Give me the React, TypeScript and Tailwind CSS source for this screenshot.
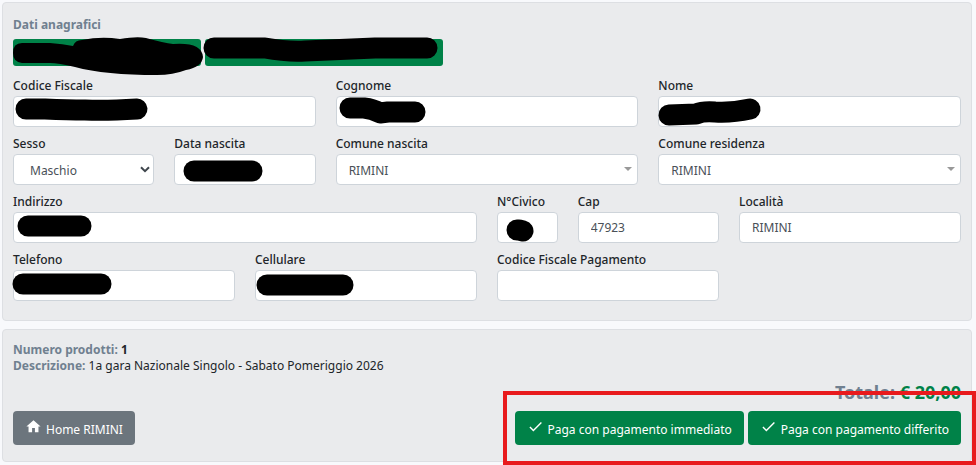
import { useId, type ReactNode } from "react";
import clsx from "clsx";
import { MdCheck, MdHome } from "react-icons/md";

const controlClass =
  "block h-[31px] w-full appearance-none rounded-[4px] border border-[#ced4da] bg-white px-3 text-[12px] text-[#495057] outline-none";

const labelClass = "block pb-[3px] font-medium whitespace-nowrap";

export default function App() {
  return (
    <div className="min-h-screen bg-[#f8f9fc] pt-0.5 pr-1 pb-0.5 pl-0.5 font-['Noto_Sans',sans-serif] text-[12px] leading-[15px] text-[#212529]">
      <main className="space-y-2">
        <Panel>
          <h2 className="leading-6 font-bold text-[#708090]">Dati anagrafici</h2>
          <div className="mt-0.5 flex gap-1">
            <HiddenButton label="Modifica anagrafica" className="w-[188px]">
              <path d="M0 14Q0 4 9 4H37Q50 5 60 7Q62 1 69 1Q88 -3 107 0Q124 -3 133 -1Q151 4 160 5Q189 3 190 18Q189 28 173 31Q160 36 144 36Q92 36 62 28Q45 24 37 24H9Q0 23 0 14Z" />
            </HiddenButton>
            <HiddenButton label="Nuova anagrafica" className="w-[238px]">
              <Stroke path="M9 9H60Q82 13 100 12Q145 10 170 9H222" />
            </HiddenButton>
          </div>

          <form className="mt-3 grid grid-cols-12 gap-x-5 gap-y-[9px]">
            <TextField label="Codice Fiscale" span="col-span-4" scribble="M13 13H32Q55 14 72 14Q92 15 124 13" />
            <TextField label="Cognome" span="col-span-4" scribble="M14 12H28Q37 13 44 17L52 16H79" />
            <TextField label="Nome" span="col-span-4" scribble="M11 19L38 18Q45 15 57 16Q74 17 92 13" />

            <SelectField label="Sesso" span="col-span-2" value="Maschio" native />
            <TextField label="Data nascita" span="col-span-2" scribble="M20 17H78" />
            <SelectField label="Comune nascita" span="col-span-4" value="RIMINI" />
            <SelectField label="Comune residenza" span="col-span-4" value="RIMINI" />

            <TextField label="Indirizzo" span="col-span-6" scribble="M15 14H68" />
            <TextField label="N°Civico" span="col-span-1" scribble="M20 18L22 18L26 19" />
            <TextField label="Cap" span="col-span-2" value="47923" />
            <TextField label="Località" span="col-span-3" value="RIMINI" />

            <TextField label="Telefono" span="col-span-3" scribble="M10 14H88" />
            <TextField label="Cellulare" span="col-span-3" scribble="M12 15H88" />
            <TextField label="Codice Fiscale Pagamento" span="col-span-3" />
          </form>
          <div className="h-[9px]" />
        </Panel>

        <Panel>
          <div className="pt-0.5 leading-4">
            <p>
              <b className="text-[#708090]">Numero prodotti:</b> <b>1</b>
            </p>
            <p>
              <b className="text-[#708090]">Descrizione:</b> 1a gara Nazionale Singolo - Sabato
              Pomeriggio 2026
            </p>
          </div>
          <p className="mt-1.5 text-right text-[18px] leading-6 font-bold text-[#008248]">
            <span className="text-[#708090]">Totale:</span> € 20,00
          </p>
          <div className="mt-[7px] mb-1.5 flex justify-between">
            <ActionButton icon={<MdHome size={17} />} className="bg-[#6c757d]">
              Home RIMINI
            </ActionButton>
            <div className="relative flex gap-1">
              <ActionButton icon={<MdCheck size={17} />} className="bg-[#008248]">
                Paga con pagamento immediato
              </ActionButton>
              <ActionButton icon={<MdCheck size={17} />} className="bg-[#008248]">
                Paga con pagamento differito
              </ActionButton>
              <div className="pointer-events-none absolute -top-5 -right-[15px] -bottom-5 -left-3 border-4 border-[#e81a1d]" />
            </div>
          </div>
        </Panel>
      </main>
    </div>
  );
}

const Panel = ({ children }: { children: ReactNode }) => (
  <section className="rounded-[4px] border border-[#dddfe3] bg-[#eaebed] p-2.5">{children}</section>
);

const Scribble = ({ children }: { children: ReactNode }) => (
  <svg
    className="pointer-events-none absolute top-0 left-0 size-px overflow-visible"
    aria-hidden="true"
  >
    {children}
  </svg>
);

const Stroke = ({ path }: { path: string }) => (
  <path
    d={path}
    fill="none"
    stroke="#000"
    strokeWidth={21}
    strokeLinecap="round"
    strokeLinejoin="round"
  />
);

const HiddenButton = ({
  label,
  className,
  children,
}: {
  label: string;
  className: string;
  children: ReactNode;
}) => (
  <button
    type="button"
    aria-label={label}
    className={clsx("relative h-[27px] rounded-[3px] bg-[#008248]", className)}
  >
    <Scribble>{children}</Scribble>
  </button>
);

const TextField = ({
  label,
  span,
  value,
  scribble,
}: {
  label: string;
  span: string;
  value?: string;
  scribble?: string;
}) => {
  const id = useId();
  return (
    <div className={span}>
      <label htmlFor={id} className={labelClass}>
        {label}
      </label>
      <div className="relative">
        <input id={id} type="text" defaultValue={value} className={controlClass} />
        {scribble && (
          <Scribble>
            <Stroke path={scribble} />
          </Scribble>
        )}
      </div>
    </div>
  );
};

const SelectField = ({
  label,
  span,
  value,
  native,
}: {
  label: string;
  span: string;
  value: string;
  native?: boolean;
}) => {
  const id = useId();
  return (
    <div className={span}>
      <label htmlFor={id} className={labelClass}>
        {label}
      </label>
      <div className="relative">
        <select id={id} className={clsx(controlClass, "pt-0.5", native && "pl-4")}>
          <option>{value}</option>
        </select>
        {native ? (
          <svg
            className="pointer-events-none absolute top-3 right-1 h-[7px] w-[10px]"
            viewBox="0 0 10 7"
            aria-hidden="true"
          >
            <path d="M1 1.2L5 5.2L9 1.2" fill="none" stroke="#3f464d" strokeWidth="2" />
          </svg>
        ) : (
          <svg
            className="pointer-events-none absolute top-[13px] right-1.5 h-1 w-2"
            viewBox="0 0 8 4"
            aria-hidden="true"
          >
            <path d="M0 0H8L4 4Z" fill="#999" />
          </svg>
        )}
      </div>
    </div>
  );
};

const ActionButton = ({
  icon,
  className,
  children,
}: {
  icon: ReactNode;
  className: string;
  children: ReactNode;
}) => (
  <button
    type="button"
    className={clsx(
      "flex h-[34px] items-center gap-1 rounded-[4px] px-3 whitespace-nowrap text-white",
      className,
    )}
  >
    <span className="pb-1">{icon}</span>
    <span className="pt-0.5">{children}</span>
  </button>
);
